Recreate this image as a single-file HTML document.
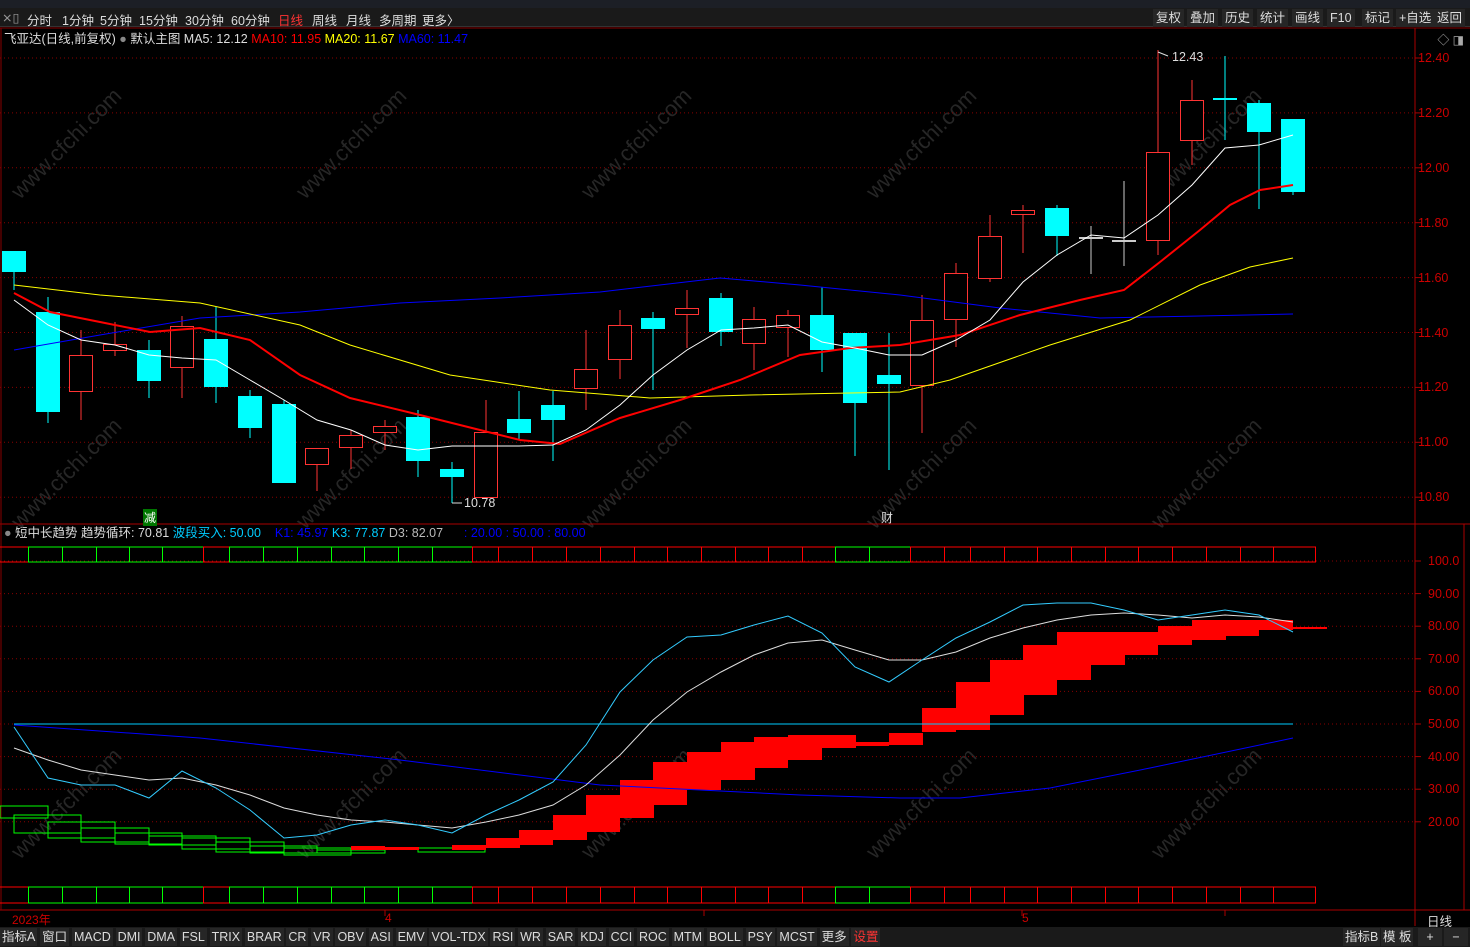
<!DOCTYPE html>
<html><head><meta charset="utf-8"><style>
*{margin:0;padding:0;box-sizing:border-box}
body{width:1470px;height:947px;background:#000;overflow:hidden;font-family:"Liberation Sans","Noto Sans CJK SC",sans-serif;font-size:12px;color:#ddd;position:relative}
.top{position:absolute;left:0;top:0;width:1470px;height:8px;background:#1c1f26}
.bar{position:absolute;left:0;top:8px;width:1470px;height:19px;background:#1a1a1a;border-bottom:1px solid #333}
.bar span{position:absolute;top:2px;font-size:12.5px;color:#ddd}
.rb span{position:absolute;top:9px;height:18px;line-height:18px;padding:0 3px;background:#262626;color:#ddd;font-size:12.5px}
.info{position:absolute;top:28px;left:4px;font-size:12.5px;white-space:nowrap}
.bot{position:absolute;left:0;top:927px;width:1470px;height:20px;background:#1a1a1a}
.bot span{display:inline-block;height:18px;line-height:18px;margin-top:1px;padding:0 2px;background:#262626;margin-right:2.8px;font-size:12.5px;color:#ddd}
svg{position:absolute;left:0;top:0}
</style></head><body>
<div class="top"></div>
<div class="bar">
<span style="left:2px;color:#999">⨯▯</span>
<span style="left:27px">分时</span><span style="left:62px">1分钟</span><span style="left:100px">5分钟</span><span style="left:139px">15分钟</span><span style="left:185px">30分钟</span><span style="left:231px">60分钟</span><span style="left:278px;color:#f33">日线</span><span style="left:312px">周线</span><span style="left:346px">月线</span><span style="left:379px">多周期</span><span style="left:422px">更多〉</span>
</div>
<div class="rb"><span style="left:1153px">复权</span><span style="left:1187px">叠加</span><span style="left:1222px">历史</span><span style="left:1257px">统计</span><span style="left:1292px">画线</span><span style="left:1327px">F10</span><span style="left:1362px">标记</span><span style="left:1396px">+自选</span><span style="left:1434px">返回</span></div>
<div class="info">飞亚达(日线,前复权) <span style="color:#888">●</span> 默认主图 MA5: 12.12 <span style="color:#f00">MA10: 11.95</span> <span style="color:#ff0">MA20: 11.67</span> <span style="color:#00f">MA60: 11.47</span></div>
<div class="info" style="top:522px">
<span style="color:#888">●</span> 短中长趋势 趋势循环: 70.81 <span style="color:#0cf">波段买入: 50.00</span> &nbsp;&nbsp;&nbsp;<span style="color:#00f">K1: 45.97</span> <span style="color:#0cf">K3: 77.87</span> <span style="color:#bbb">D3: 82.07</span> &nbsp;&nbsp;&nbsp;&nbsp;&nbsp;<span style="color:#00f">: 20.00 : 50.00 : 80.00</span></div>
<svg id="s" width="1470" height="947"></svg>
<div style="position:absolute;left:12px;top:911px;color:#c00;font-size:12px">2023年</div>
<div style="position:absolute;left:385px;top:911px;color:#c00;font-size:12px">4</div>
<div style="position:absolute;left:1022px;top:911px;color:#c00;font-size:12px">5</div>
<div style="position:absolute;left:1427px;top:911px;color:#ddd;font-size:12.5px">日线</div>
<div style="position:absolute;left:143px;top:509px;background:#070;color:#fff;font-size:12px;padding:0 1px">减</div>
<div style="position:absolute;left:881px;top:509px;color:#ddd;font-size:12px">财</div>
<div style="position:absolute;left:1172px;top:50px;color:#ddd;font-size:12.5px">12.43</div>
<div style="position:absolute;left:464px;top:496px;color:#ddd;font-size:12.5px">10.78</div>
<div class="bot"><span>指标A</span><span>窗口</span><span>MACD</span><span>DMI</span><span>DMA</span><span>FSL</span><span>TRIX</span><span>BRAR</span><span>CR</span><span>VR</span><span>OBV</span><span>ASI</span><span>EMV</span><span>VOL-TDX</span><span>RSI</span><span>WR</span><span>SAR</span><span>KDJ</span><span>CCI</span><span>ROC</span><span>MTM</span><span>BOLL</span><span>PSY</span><span>MCST</span><span>更多</span><span style="color:#f33">设置</span>
<span style="position:absolute;left:1343px">指标B</span><span style="position:absolute;left:1381px">模 板</span><span style="position:absolute;left:1418px;width:24px;text-align:center">+</span><span style="position:absolute;left:1444px;width:24px;text-align:center">−</span></div>
<div style="position:absolute;right:6px;top:31px;color:#aaa;font-size:12px">◇ ◨</div>
<div style="position:absolute;left:1418px;top:31px;color:#c00;font-size:12.5px;line-height:54.9px">12.40<br>12.20<br>12.00<br>11.80<br>11.60<br>11.40<br>11.20<br>11.00<br>10.80</div>
<div style="position:absolute;left:1428px;top:545px;color:#c00;font-size:12.5px;line-height:32.6px">100.0<br>90.00<br>80.00<br>70.00<br>60.00<br>50.00<br>40.00<br>30.00<br>20.00</div>
<script>
var s=document.getElementById('s'),h='';
function L(x1,y1,x2,y2,c,w,d){h+='<line x1="'+x1+'" y1="'+y1+'" x2="'+x2+'" y2="'+y2+'" stroke="'+c+'" stroke-width="'+(w||1)+'"'+(d?' stroke-dasharray="'+d+'"':'')+'/>';}
function R(x,y,w,hh,f,st){h+='<rect x="'+x+'" y="'+y+'" width="'+w+'" height="'+hh+'" fill="'+(f||'none')+'"'+(st?' stroke="'+st+'"':'')+'/>';}
function P(pts,c,w){h+='<polyline fill="none" stroke="'+c+'" stroke-width="'+(w||1)+'" points="'+pts.join(' ')+'"/>';}
for(var i=0;i<5;i++)for(var j=0;j<3;j++){var wx=20+i*285,wy=200+j*330;h+='<text x="'+wx+'" y="'+wy+'" fill="#262626" font-size="22" font-family="Liberation Sans" transform="rotate(-45 '+wx+' '+wy+')">www.cfchi.com</text>';}
L(0,28,1470,28,'#800');L(1415,28,1415,926,'#a00');L(0,524,1470,524,'#a00');L(0,910,1470,910,'#a00');L(1,28,1,910,'#800');
L(1415,524,1464,524,'#a00');L(1464,524,1464,910,'#a00');
for(var k=0;k<9;k++){var y=58+k*54.9;L(0,y,1415,y,'#800',1,'1 3');L(1415,y,1421,y,'#a00');}
for(var k=0;k<9;k++){var y=561+k*32.6;L(0,y,1415,y,'#800',1,'1 3');L(1415,y,1421,y,'#a00');}
var c=[[14,251,272,251,290,0],[48,312,412,297,423,0],[81,355,391,330,420,1],[115,344,350,322,356,1],[149,350,381,340,398,0],[182,326,367,316,398,1],[216,339,387,307,403,0],[250,396,428,390,438,0],[284,404,483,400,483,0],[317,448,464,448,491,1],[351,435,447,430,469,1],[385,426,432,420,450,1],[418,417,461,410,477,0],[452,469,477,462,503,0],[486,432,497,400,497,1],[519,419,433,391,440,0],[553,405,420,391,461,0],[586,369,388,330,410,1],[620,325,359,310,379,1],[653,318,329,312,390,0],[687,308,314,290,348,1],[721,298,332,293,346,0],[754,319,343,307,370,1],[788,315,327,310,357,1],[822,315,350,287,372,0],[855,333,403,333,456,0],[889,375,384,333,470,0],[922,320,385,295,433,1],[956,273,319,263,347,1],[990,236,278,215,282,1],[1023,210,214,205,253,1],[1057,208,236,205,256,0],[1091,237,238,226,274,2],[1124,240,241,181,266,2],[1158,152,240,50,255,1],[1192,100,140,80,165,1],[1225,98,99,56,140,0],[1259,103,132,100,209,0],[1293,119,192,119,195,0]];
c.forEach(function(a){var x=a[0],col=a[5]==1?'#f33':(a[5]==2?'#ccc':'#0ff');L(x,a[3],x,a[1],col);L(x,a[2],x,a[4],col);
if(a[5]==1)R(x-11.5,a[1]+.5,23,a[2]-a[1],'#000','#f33');else R(x-12,a[1],24,Math.max(a[2]-a[1],2),col);});
P([[14,350],[100,335],[200,318],[300,312],[400,303],[500,298],[600,292],[720,278],[800,285],[900,295],[1000,308],[1100,318],[1200,316],[1293,314]],'#00f');
P([[14,285],[100,295],[200,303],[300,325],[350,345],[450,375],[550,390],[650,398],[750,395],[850,393],[900,392],[950,380],[1050,345],[1130,320],[1200,285],[1250,267],[1293,258]],'#ff0');
P([[14,293],[50,312],[100,322],[150,332],[200,328],[250,340],[300,375],[350,398],[420,415],[480,430],[520,440],[560,444],[620,418],[680,400],[740,380],[800,355],[850,348],[900,345],[960,335],[1020,315],[1080,300],[1124,290],[1160,262],[1200,230],[1230,205],[1260,190],[1293,185]],'#f00',2);
P([[14,300],[48,325],[81,340],[115,345],[149,355],[182,358],[216,360],[250,380],[284,400],[317,420],[351,430],[385,445],[418,450],[452,446],[486,446],[519,446],[553,445],[586,430],[620,405],[653,375],[687,350],[721,330],[754,328],[788,325],[822,342],[855,348],[889,355],[922,355],[956,340],[990,320],[1023,282],[1057,255],[1091,235],[1124,238],[1158,215],[1192,185],[1225,148],[1259,145],[1293,135]],'#fff');
[[547,562],[887,903]].forEach(function(r){L(0,r[0],1315,r[0],'#f00');L(0,r[1],1315,r[1],'#f00');
var xs=[28,62,96,129,162,203,229,263,297,331,364,398,432,472,498,532,566,600,634,667,701,735,768,802,835,869,910,944,970,1004,1037,1071,1105,1138,1172,1206,1240,1273,1315];
var g=function(x){return (x>=28&&x<203)||(x>=229&&x<472)||(x>=835&&x<910);};
for(var i=0;i<xs.length-1;i++){var col=g(xs[i])?'#0f0':'#f00';R(xs[i]+.5,r[0],xs[i+1]-xs[i],r[1]-r[0],'none',col);}});
[[0,48,806,818],[14,81,815,833],[48,115,822,838],[81,149,828,842],[115,182,833,844],[149,216,836,845],[182,250,838,849],[216,284,842,852],[250,317,846,853],[284,351,848,855],[317,385,850,853],[418,485,848,852]].forEach(function(b){R(b[0],b[2],b[1]-b[0],b[3]-b[2],'none','#0f0');});
var rb=[[351,846,850],[385,847,850],[452,845,850],[486,838,848],[519,830,845],[553,815,840],[586,795,832],[620,780,818],[653,762,805],[687,752,790],[721,742,780],[754,737,768],[788,735,760],[822,735,748],[855,742,746],[889,733,745],[922,708,732],[956,682,730],[990,660,715],[1023,645,695],[1057,632,680],[1091,632,665],[1124,632,655],[1158,626,645],[1192,620,640],[1225,620,636],[1259,620,630]];
rb.forEach(function(b){R(b[0],b[1],34,b[2]-b[1],'#f00');});
L(1259,628,1327,628,'#f00',2);
L(14,724,1293,724,'#0cf');
P([[14,725],[200,738],[400,760],[600,785],[800,795],[900,798],[960,798],[1050,788],[1150,768],[1293,738]],'#00f');
P([[14,748],[48,760],[81,770],[115,775],[149,780],[182,778],[216,785],[250,795],[284,808],[317,815],[351,820],[385,822],[418,825],[452,828],[486,822],[519,815],[553,805],[586,785],[620,755],[653,720],[687,692],[721,672],[754,655],[788,643],[822,640],[855,650],[889,660],[922,660],[956,652],[990,638],[1023,628],[1057,620],[1091,615],[1124,613],[1158,615],[1192,618],[1225,615],[1259,617],[1293,622]],'#ddd');
P([[14,727],[48,778],[81,785],[115,785],[149,798],[182,771],[216,788],[250,810],[284,838],[317,835],[351,825],[385,820],[418,825],[452,833],[486,815],[519,800],[553,782],[586,745],[620,692],[653,660],[687,637],[721,635],[754,625],[788,616],[822,633],[855,667],[889,682],[922,660],[956,638],[990,622],[1023,605],[1057,603],[1091,603],[1124,610],[1158,620],[1192,615],[1225,610],[1259,615],[1293,632]],'#3cf');
[385,704,1022,1225].forEach(function(x){L(x,910,x,916,'#a00');});
L(1158,52,1168,56,'#ddd');L(452,503,462,503,'#ddd');
s.innerHTML=h;
</script>
</body></html>
